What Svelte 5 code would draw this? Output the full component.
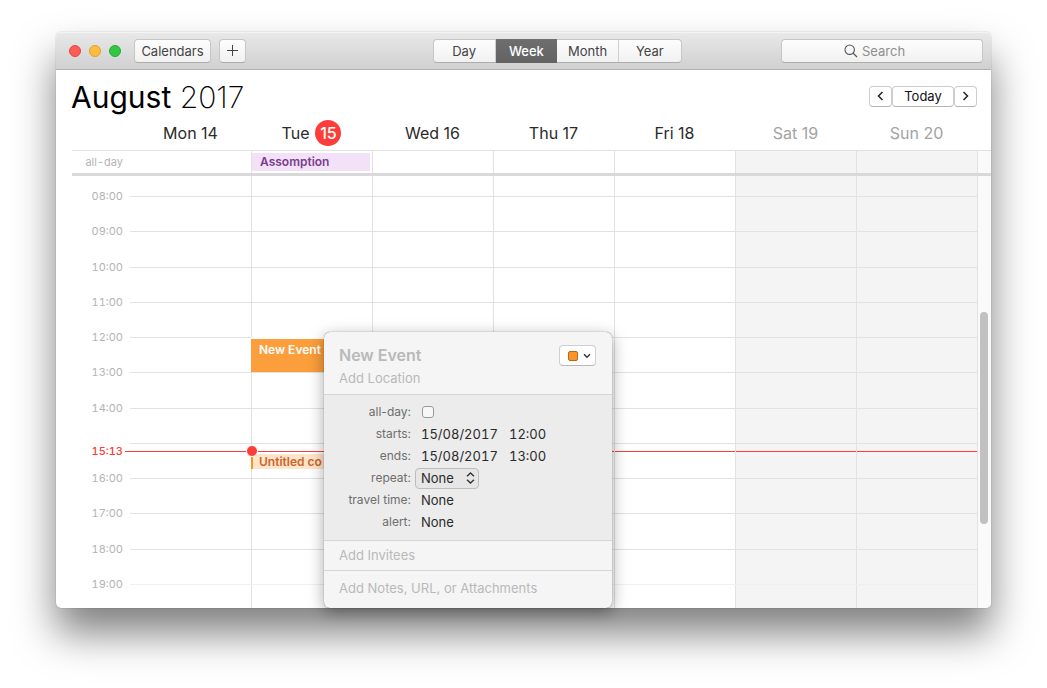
<script>
  const views = ['Day', 'Week', 'Month', 'Year'];
  let view = $state('Week');

  const days = [
    { name: 'Mon', date: 14 },
    { name: 'Tue', date: 15, today: true, allDay: 'Assomption' },
    { name: 'Wed', date: 16 },
    { name: 'Thu', date: 17 },
    { name: 'Fri', date: 18 },
    { name: 'Sat', date: 19, weekend: true },
    { name: 'Sun', date: 20, weekend: true }
  ];

  const firstHour = 8;
  const hourCount = 12;
  const now = 15 + 13 / 60;
  const hours = Array.from({ length: hourCount }, (_, i) => firstHour + i);
  const events = [
    { id: 1, title: 'New Event', start: 12, end: 13, kind: 'solid' },
    { id: 2, title: 'Untitled co', start: 15.25, end: 15.75, kind: 'tinted' }
  ];

  const clock = (h) => String(h).padStart(2, '0') + ':00';
  const pct = (h) => ((h - firstHour) / hourCount) * 100;
</script>

<main class="desktop">
  <div class="window">
    <header class="toolbar">
      <div class="left">
        <div class="lights">
          <button class="light red" aria-label="Close"></button>
          <button class="light yellow" aria-label="Minimise"></button>
          <button class="light green" aria-label="Zoom"></button>
        </div>
        <button class="tool">Calendars</button>
        <button class="tool plus" aria-label="Add event">
          <svg width="13" height="13" viewBox="0 0 13 13"><path d="M6.5 1v11M1 6.5h11" stroke="#444" fill="none" /></svg>
        </button>
      </div>
      <div class="segments">
        {#each views as v}
          <button class:active={view === v} onclick={() => (view = v)}>{v}</button>
        {/each}
      </div>
      <label class="search">
        <svg width="14" height="14" viewBox="0 0 14 14"><circle cx="5.7" cy="5.7" r="4.7" fill="none" stroke="#555" stroke-width="1.1" /><path d="M9.1 9.1l3.9 3.9" stroke="#555" stroke-width="1.3" /></svg>
        <input type="text" placeholder="Search" aria-label="Search" />
      </label>
    </header>

    <section class="heading">
      <h1>August <span>2017</span></h1>
      <div class="pager">
        <button class="step" aria-label="Previous week">
          <svg width="7" height="10" viewBox="0 0 7 10"><path d="M5.5 1L1.5 5l4 4" fill="none" stroke="#222" stroke-width="1.5" /></svg>
        </button>
        <button class="today">Today</button>
        <button class="step" aria-label="Next week">
          <svg width="7" height="10" viewBox="0 0 7 10"><path d="M1.5 1l4 4-4 4" fill="none" stroke="#222" stroke-width="1.5" /></svg>
        </button>
      </div>
    </section>

    <section class="calendar">
      <div class="week names">
        <span></span>
        {#each days as d}
          <div class="name" class:weekend={d.weekend}>
            {#if d.today}<span>{d.name}</span><span class="badge">{d.date}</span>{:else}{d.name} {d.date}{/if}
          </div>
        {/each}
      </div>

      <div class="week allday">
        <span class="label">all-day</span>
        {#each days as d}
          <div class="day" class:weekend={d.weekend}>
            {#if d.allDay}<div class="banner">{d.allDay}</div>{/if}
          </div>
        {/each}
        <div class="gutter"></div>
      </div>

      <div class="body">
        <div class="week columns">
          <span></span>
          {#each days as d}
            <div class="day" class:weekend={d.weekend}></div>
          {/each}
          <div class="gutter"><div class="thumb"></div></div>
        </div>

        <div class="hours">
          {#each hours as h}
            <div class="hour" class:faint={h === 19}>
              <span class="time">{h === 15 ? '' : clock(h)}</span>
              <span class="rule"></span>
            </div>
          {/each}
        </div>

        <div class="week entries">
          <div class="slot">
            <span class="now-label" style="top: {pct(now)}%">15:13</span>
            <i class="now lead" style="top: {pct(now)}%"></i>
          </div>
          {#each days as d}
            <div class="slot">
              <i class="now" style="top: {pct(now)}%"></i>
              {#if d.today}
                {#each events as e (e.id)}
                  <div class="event {e.kind}" style="top: {pct(e.start)}%; height: {pct(e.end) - pct(e.start)}%">{e.title}</div>
                {/each}
                <i class="dot" style="top: {pct(now)}%"></i>
              {/if}
            </div>
          {/each}
        </div>
      </div>
    </section>

    <form class="popover">
      <div class="head">
        <div class="titles">
          <input class="title" type="text" placeholder="New Event" aria-label="Title" />
          <input type="text" placeholder="Add Location" aria-label="Location" />
        </div>
        <button type="button" class="color" aria-label="Calendar colour">
          <i></i>
          <svg width="8" height="6" viewBox="0 0 8 6"><path d="M1 1.2l3 3 3-3" fill="none" stroke="#333" stroke-width="1.4" /></svg>
        </button>
      </div>
      <div class="fields">
        <label for="allday">all-day:</label>
        <input id="allday" type="checkbox" />
        <label for="starts">starts:</label>
        <div class="when"><input id="starts" type="text" value="15/08/2017" /><input class="hm" type="text" value="12:00" aria-label="start time" /></div>
        <label for="ends">ends:</label>
        <div class="when"><input id="ends" type="text" value="15/08/2017" /><input class="hm" type="text" value="13:00" aria-label="end time" /></div>
        <label for="repeat">repeat:</label>
        <div class="pick">
          <select id="repeat"><option>None</option></select>
          <svg width="9" height="12" viewBox="0 0 9 12"><path d="M1 4.2L4.5 1 8 4.2M1 7.8L4.5 11 8 7.8" fill="none" stroke="#333" stroke-width="1.4" /></svg>
        </div>
        <label for="travel">travel time:</label>
        <select id="travel"><option>None</option></select>
        <label for="alert">alert:</label>
        <select id="alert"><option>None</option></select>
      </div>
      <div class="extra"><input type="text" placeholder="Add Invitees" aria-label="Invitees" /></div>
      <div class="extra notes"><input type="text" placeholder="Add Notes, URL, or Attachments" aria-label="Notes" /></div>
    </form>
  </div>
</main>

<style>
  :global(body) {
    margin: 0;
    background: #fff;
  }
  * {
    box-sizing: border-box;
  }
  .desktop {
    display: flex;
    height: 100vh;
    min-height: 640px;
    padding: 32px 56px 80px;
    overflow: hidden;
    font: 13px/16px Inter, 'Liberation Sans', sans-serif;
    color: #2a2a2a;
  }
  button, input, select {
    margin: 0;
    padding: 0;
    border: 0;
    background: none;
    font: inherit;
    color: inherit;
    outline: none;
  }
  svg {
    display: block;
    flex: none;
  }
  .window {
    position: relative;
    display: flex;
    flex: 1;
    flex-direction: column;
    min-width: 0;
    border-radius: 5px;
    background: #fff;
    box-shadow: 0 0 1px rgba(0, 0, 0, 0.5), 0 25px 40px rgba(0, 0, 0, 0.5);
  }

  .toolbar {
    display: grid;
    grid-template-columns: auto 15fr auto 8fr auto;
    align-items: center;
    height: 38px;
    padding: 0 8px 0 13px;
    border-bottom: 1px solid #b1b1b1;
    border-radius: 5px 5px 0 0;
    background: linear-gradient(#e9e9e9, #d0d0d0);
    box-shadow: inset 0 1px #f4f4f4;
    color: #444;
  }
  .left {
    display: flex;
    align-items: center;
    gap: 8px;
  }
  .lights {
    display: flex;
    gap: 8px;
    margin-right: 5px;
  }
  .light {
    width: 12px;
    height: 12px;
    border: 1px solid;
    border-radius: 50%;
  }
  .red { background: #fc5b57; border-color: #df4744; }
  .yellow { background: #fdbc40; border-color: #dea034; }
  .green { background: #33c748; border-color: #27aa35; }
  .tool, .segments, .search {
    height: 24px;
    border: 1px solid #c6c6c6;
    border-bottom-color: #adadad;
    border-radius: 4px;
    background: linear-gradient(#fdfdfd, #f1f1f1);
  }
  .tool {
    display: grid;
    place-items: center;
    width: 77px;
  }
  .plus {
    width: 27px;
  }
  .segments {
    grid-column: 3;
    display: flex;
    width: 249px;
  }
  .segments button {
    flex: 1;
    border-right: 1px solid #cfcfcf;
  }
  .segments button:last-child {
    border-right: 0;
  }
  .segments .active {
    margin: -1px 0;
    border: 0;
    background: linear-gradient(#6e6e6e, #636363);
    color: #fff;
    font-weight: 500;
  }
  .search {
    grid-column: 5;
    display: flex;
    align-items: center;
    justify-content: center;
    gap: 4px;
    width: 202px;
  }
  .search input {
    width: 58px;
  }
  .search input::placeholder {
    color: #8e8e8e;
    opacity: 1;
  }

  .heading {
    display: flex;
    align-items: center;
    justify-content: space-between;
    height: 46px;
    padding: 8px 14px 0 15px;
  }
  h1 {
    margin: 0;
    font-size: 30px;
    line-height: 38px;
    font-weight: 400;
    color: #000;
  }
  h1 span {
    font-weight: 200;
  }
  .pager {
    display: flex;
    margin-bottom: 2px;
  }
  .pager button {
    display: grid;
    place-items: center;
    height: 21px;
    border: 1px solid #cdcdcd;
    border-bottom-color: #b4b4b4;
    border-radius: 4px;
    color: #111;
  }
  .step {
    width: 23px;
  }
  .today {
    width: 62px;
  }

  .calendar {
    display: flex;
    flex: 1;
    flex-direction: column;
    min-height: 0;
    padding-left: 16px;
  }
  .week {
    display: grid;
    grid-template-columns: 58px repeat(7, minmax(0, 1fr)) 14px;
  }
  .names {
    height: 34px;
    align-items: center;
    font-size: 16px;
    line-height: 26px;
  }
  .name {
    display: flex;
    justify-content: center;
    gap: 6px;
  }
  .name.weekend {
    color: #a3a3a3;
  }
  .badge {
    width: 26px;
    height: 26px;
    border-radius: 50%;
    background: #fc3d39;
    color: #fff;
    font-weight: 500;
    text-align: center;
  }
  .allday {
    flex: none;
    height: 26px;
    border-top: 1px solid #e2e2e2;
    border-bottom: 3px solid #d9d9d9;
  }
  .label, .time {
    padding-right: 7px;
    font-size: 11px;
    font-variant-numeric: tabular-nums;
    color: #b4b4b4;
    text-align: right;
  }
  .label {
    line-height: 22px;
  }
  .day {
    border-left: 1px solid #e2e2e2;
  }
  .week > span + .day {
    border-left: 0;
  }
  .day.weekend {
    background: #f4f4f4;
  }
  .gutter {
    position: relative;
    border-left: 1px solid #e2e2e2;
    background: #fafafa;
  }
  .banner {
    height: 18px;
    margin: 2px 2px 0 0;
    padding-left: 8px;
    background: #f2e1f7;
    color: #793d8c;
    font-size: 12px;
    line-height: 18px;
    font-weight: 600;
  }
  .body {
    display: grid;
    flex: 1;
    grid-template: minmax(0, 1fr) / minmax(0, 1fr);
    min-height: 0;
    overflow: hidden;
    border-radius: 0 0 5px 0;
  }
  .columns, .hours, .entries {
    grid-area: 1 / 1;
  }
  .hours, .entries {
    height: 423px;
    margin-top: 20px;
  }
  .thumb {
    position: absolute;
    top: 136px;
    right: 3px;
    width: 8px;
    height: 212px;
    border-radius: 4px;
    background: #c1c1c1;
  }
  .hours {
    display: grid;
    grid-template-rows: repeat(12, 1fr);
    margin-right: 14px;
  }
  .hour {
    display: flex;
  }
  .time {
    width: 58px;
    margin-top: -8px;
  }
  .rule {
    flex: 1;
    border-top: 1px solid #e2e2e2;
  }
  .faint .rule {
    border-color: #efefef;
  }
  .slot {
    position: relative;
  }
  .event {
    position: absolute;
    left: 0;
    right: 2px;
    overflow: hidden;
    border-top: 2px solid #fff;
    padding-left: 8px;
    font-size: 12px;
    font-weight: 600;
    white-space: nowrap;
  }
  .solid {
    padding-top: 3px;
    background: #fc9e3b;
    color: #fff;
  }
  .tinted {
    border-left: 2px solid #f7942a;
    padding-left: 6px;
    background: #fde6cb;
    color: #d2622a;
  }
  .now-label {
    position: absolute;
    right: 7px;
    margin-top: -7px;
    color: #fc3d39;
    font-size: 11px;
    font-weight: 500;
    font-variant-numeric: tabular-nums;
  }
  .now {
    position: absolute;
    left: 1px;
    right: 0;
    height: 1px;
    margin-top: 1px;
    background: #fc3d39;
  }
  .lead {
    left: auto;
    width: 5px;
  }
  .lead, .slot:nth-child(2) .now {
    margin-left: -1px;
  }
  .dot {
    position: absolute;
    z-index: 1;
    left: -5px;
    width: 12px;
    height: 12px;
    margin-top: -5px;
    border: 1px solid #fff;
    border-radius: 50%;
    background: #fc3d39;
  }

  .popover {
    position: absolute;
    z-index: 2;
    top: 300px;
    left: 268px;
    width: 288px;
    border-radius: 6px;
    background: #f5f5f5;
    box-shadow: 0 0 1px rgba(0, 0, 0, 0.6), 0 4px 16px rgba(0, 0, 0, 0.35);
  }
  .popover ::placeholder {
    color: #b9b9b9;
    opacity: 1;
  }
  .head {
    display: flex;
    align-items: flex-start;
    justify-content: space-between;
    height: 62px;
    padding: 13px 16px 0 15px;
  }
  .titles {
    display: flex;
    flex: 1;
    flex-direction: column;
    gap: 5px;
    min-width: 0;
  }
  .titles input {
    width: 100%;
    height: 16px;
  }
  .titles .title {
    height: 20px;
    font-size: 16px;
    font-weight: 600;
  }
  .color {
    display: flex;
    align-items: center;
    justify-content: center;
    gap: 5px;
    width: 37px;
    height: 21px;
    padding-left: 3px;
    border: 1px solid #cfcfcf;
    border-bottom-color: #b8b8b8;
    border-radius: 4px;
    background: #fff;
  }
  .color i {
    width: 10px;
    height: 10px;
    border: 1px solid #b86a1c;
    border-radius: 2px;
    background: #fc9727;
  }
  .fields {
    display: grid;
    grid-template-columns: 87px 1fr;
    grid-auto-rows: 22px;
    align-items: center;
    column-gap: 10px;
    padding: 6px 0 7px;
    border: solid #d6d6d6;
    border-width: 1px 0;
    background: #ececec;
  }
  .fields label {
    font-size: 12px;
    text-align: right;
    color: #6e6e6e;
  }
  .fields select {
    appearance: none;
    width: 64px;
  }
  .fields input[type='checkbox'] {
    appearance: none;
    width: 12px;
    height: 12px;
    margin-left: 1px;
    border: 1px solid #9a9a9a;
    border-radius: 3px;
    background: #f7f7f7;
  }
  .when {
    display: flex;
    gap: 8px;
    font-variant-numeric: tabular-nums;
  }
  .when input {
    width: 80px;
    font-variant-numeric: inherit;
  }
  .when .hm {
    width: 48px;
  }
  .pick {
    display: grid;
    align-items: center;
    width: 64px;
    margin-left: -6px;
  }
  .pick > * {
    grid-area: 1 / 1;
  }
  .pick select {
    height: 21px;
    padding-left: 5px;
    border: 1px solid #bdbdbd;
    border-radius: 4px;
    background: #e6e6e6;
  }
  .pick svg {
    justify-self: end;
    margin-right: 4px;
    pointer-events: none;
  }
  .extra {
    padding: 6px 15px 7px;
  }
  .extra input {
    display: block;
    width: 100%;
    height: 16px;
  }
  .notes {
    padding: 9px 15px 12px;
    border-top: 1px solid #d6d6d6;
  }
</style>
